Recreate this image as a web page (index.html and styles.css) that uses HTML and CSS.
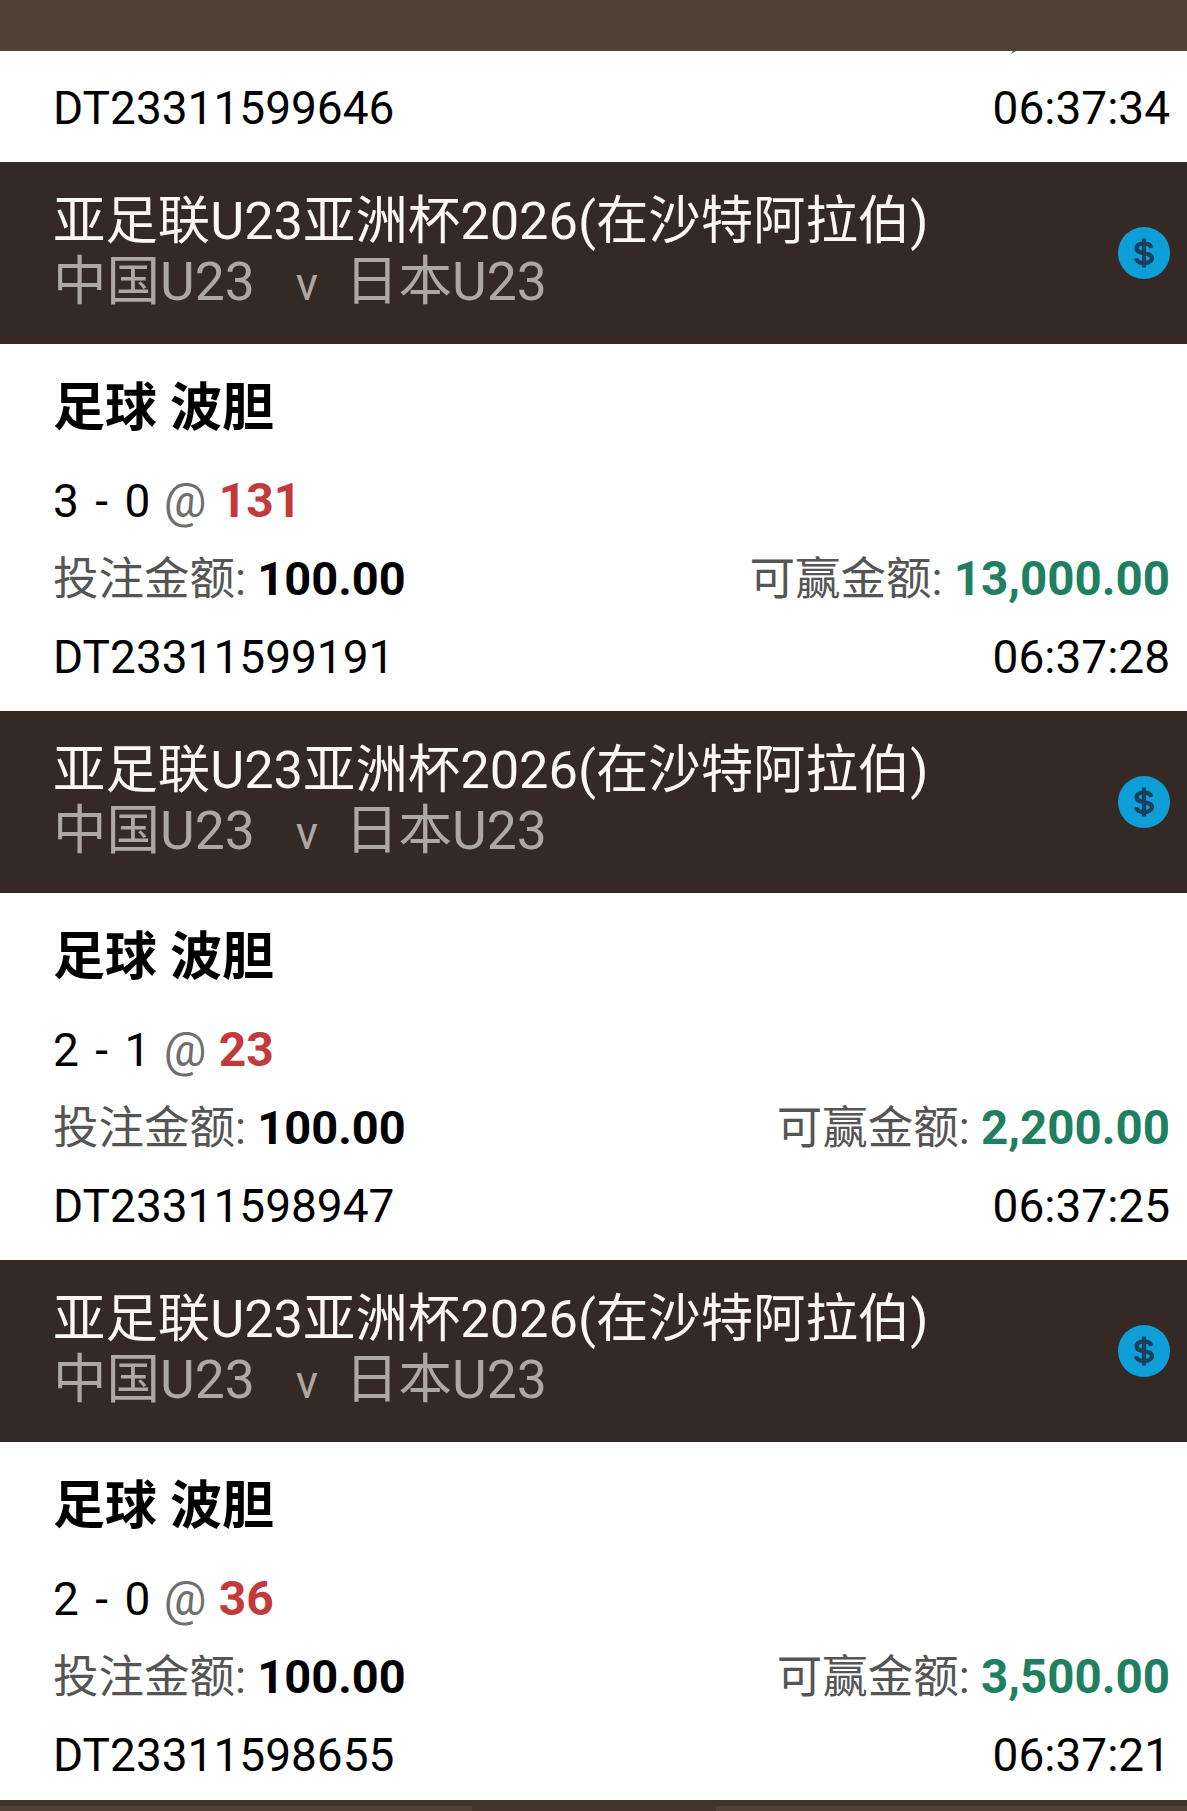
FILE: index.html
```html
<!DOCTYPE html>
<html lang="zh-CN">
<head>
    <meta charset="UTF-8">
    <meta name="viewport" content="width=device-width, initial-scale=1.0">
    <title>注单记录</title>
    <link rel="stylesheet" href="styles.css">
</head>
<body>
    <div class="top-bar"></div>

    <div class="bet-foot first-foot">
        <span class="cut-comma"></span>
        <div class="row row-id">
            <span>DT23311599646</span>
            <span>06:37:34</span>
        </div>
    </div>

    <section class="bet">
        <div class="bet-head">
            <div class="head-text">
                <div class="league">亚足联U23亚洲杯2026(在沙特阿拉伯)</div>
                <div class="teams"><span>中国U23</span><span class="vs">v</span><span>日本U23</span></div>
            </div>
            <svg class="coin" viewBox="0 0 52 52"><circle cx="26" cy="26" r="26" fill="#0f9fd8"/><path d="M33.500 21c-.8-3-3.800-4.700-7.500-4.700-4.200 0-7.500 2-7.500 5 0 7 15.500 2.800 15.500 9.800 0 3-3.400 4.900-8 4.900-4 0-7.200-1.700-8-4.800M26 11.500v29" fill="none" stroke="#17405c" stroke-width="4.200"/></svg>
        </div>
        <div class="bet-body">
            <div class="market">足球 波胆</div>
            <div class="row row-pick"><span><span class="score">3 - 0</span> <span class="at">@</span> <b class="odds">131</b></span></div>
            <div class="row row-money">
                <span>投注金额: <b class="stake">100.00</b></span>
                <span>可赢金额: <b class="win">13,000.00</b></span>
            </div>
            <div class="row row-id">
                <span>DT23311599191</span>
                <span>06:37:28</span>
            </div>
        </div>
    </section>

    <section class="bet">
        <div class="bet-head">
            <div class="head-text">
                <div class="league">亚足联U23亚洲杯2026(在沙特阿拉伯)</div>
                <div class="teams"><span>中国U23</span><span class="vs">v</span><span>日本U23</span></div>
            </div>
            <svg class="coin" viewBox="0 0 52 52"><circle cx="26" cy="26" r="26" fill="#0f9fd8"/><path d="M33.500 21c-.8-3-3.800-4.700-7.500-4.700-4.200 0-7.500 2-7.500 5 0 7 15.500 2.800 15.500 9.800 0 3-3.400 4.900-8 4.900-4 0-7.200-1.700-8-4.800M26 11.500v29" fill="none" stroke="#17405c" stroke-width="4.200"/></svg>
        </div>
        <div class="bet-body">
            <div class="market">足球 波胆</div>
            <div class="row row-pick"><span><span class="score">2 - 1</span> <span class="at">@</span> <b class="odds">23</b></span></div>
            <div class="row row-money">
                <span>投注金额: <b class="stake">100.00</b></span>
                <span>可赢金额: <b class="win">2,200.00</b></span>
            </div>
            <div class="row row-id">
                <span>DT23311598947</span>
                <span>06:37:25</span>
            </div>
        </div>
    </section>

    <section class="bet">
        <div class="bet-head">
            <div class="head-text">
                <div class="league">亚足联U23亚洲杯2026(在沙特阿拉伯)</div>
                <div class="teams"><span>中国U23</span><span class="vs">v</span><span>日本U23</span></div>
            </div>
            <svg class="coin" viewBox="0 0 52 52"><circle cx="26" cy="26" r="26" fill="#0f9fd8"/><path d="M33.500 21c-.8-3-3.800-4.700-7.500-4.700-4.200 0-7.500 2-7.500 5 0 7 15.500 2.800 15.500 9.800 0 3-3.400 4.900-8 4.900-4 0-7.200-1.700-8-4.800M26 11.500v29" fill="none" stroke="#17405c" stroke-width="4.200"/></svg>
        </div>
        <div class="bet-body last-body">
            <div class="market">足球 波胆</div>
            <div class="row row-pick"><span><span class="score">2 - 0</span> <span class="at">@</span> <b class="odds">36</b></span></div>
            <div class="row row-money">
                <span>投注金额: <b class="stake">100.00</b></span>
                <span>可赢金额: <b class="win">3,500.00</b></span>
            </div>
            <div class="row row-id">
                <span>DT23311598655</span>
                <span>06:37:21</span>
            </div>
        </div>
    </section>

    <div class="bottom-bar">
        <div class="bottom-tab"></div>
        <div class="bottom-gap"></div>
        <div class="bottom-tab"></div>
    </div>
</body>
</html>
```

FILE: styles.css
```css
/* Bet slip list */
html, body {
    margin: 0;
    padding: 0;
}

body {
    height: 1811px;
    overflow: hidden;
    background: #fff;
    color: #000;
    font-family: Roboto, "Noto Sans CJK SC", sans-serif;
    font-size: 46px;
}

.top-bar {
    height: 51px;
    background: #504035;
}

.first-foot {
    position: relative;
    height: 111px;
    padding: 2px 17px 0 53px;
    display: flex;
    flex-direction: column;
    justify-content: center;
    box-sizing: border-box;
}

.cut-comma {
    position: absolute;
    top: 0;
    left: 1011px;
    width: 5px;
    height: 3px;
    background: #217f61;
    clip-path: polygon(35% 0, 100% 0, 0 100%);
}

.bet-head {
    height: 182px;
    padding: 0 17px 0 53px;
    background: #352a23;
    display: flex;
    align-items: center;
    justify-content: space-between;
    box-sizing: border-box;
}

.head-text {
    margin-bottom: 2px;
}

.league {
    font-size: 52.4px;
    line-height: 62px;
    color: #fbf8f2;
}

.teams {
    font-size: 53.5px;
    line-height: 60px;
    color: #aea8a2;
}

.vs {
    margin: 0 27px 0 41px;
    font-size: 46px;
}

.coin {
    width: 52px;
    height: 52px;
}

.bet-body {
    height: 367px;
    padding: 0 17px 0 53px;
    box-sizing: border-box;
}

.last-body {
    height: 358px;
}

.market {
    height: 106px;
    padding-top: 12px;
    font-size: 52px;
    line-height: 106px;
    font-weight: 700;
}

.row {
    display: flex;
    justify-content: space-between;
    height: 78px;
    line-height: 78px;
}

.score {
    word-spacing: 5px;
}

.at {
    margin: 0 1px 0 2px;
    font-size: 47.5px;
    color: #6f6f6f;
}

.odds {
    font-size: 48px;
    color: #c33a3c;
}

.row-money {
    font-size: 45.5px;
    color: #555;
}

.stake {
    font-size: 47px;
    color: #000;
}

.win {
    font-size: 47.5px;
    color: #217f61;
}

.bottom-bar {
    height: 11px;
    padding-top: 6px;
    background: #43352b;
    display: flex;
    box-sizing: border-box;
}

.bottom-tab {
    flex: 1;
    background: #504035;
}

.bottom-gap {
    width: 244px;
}
```
